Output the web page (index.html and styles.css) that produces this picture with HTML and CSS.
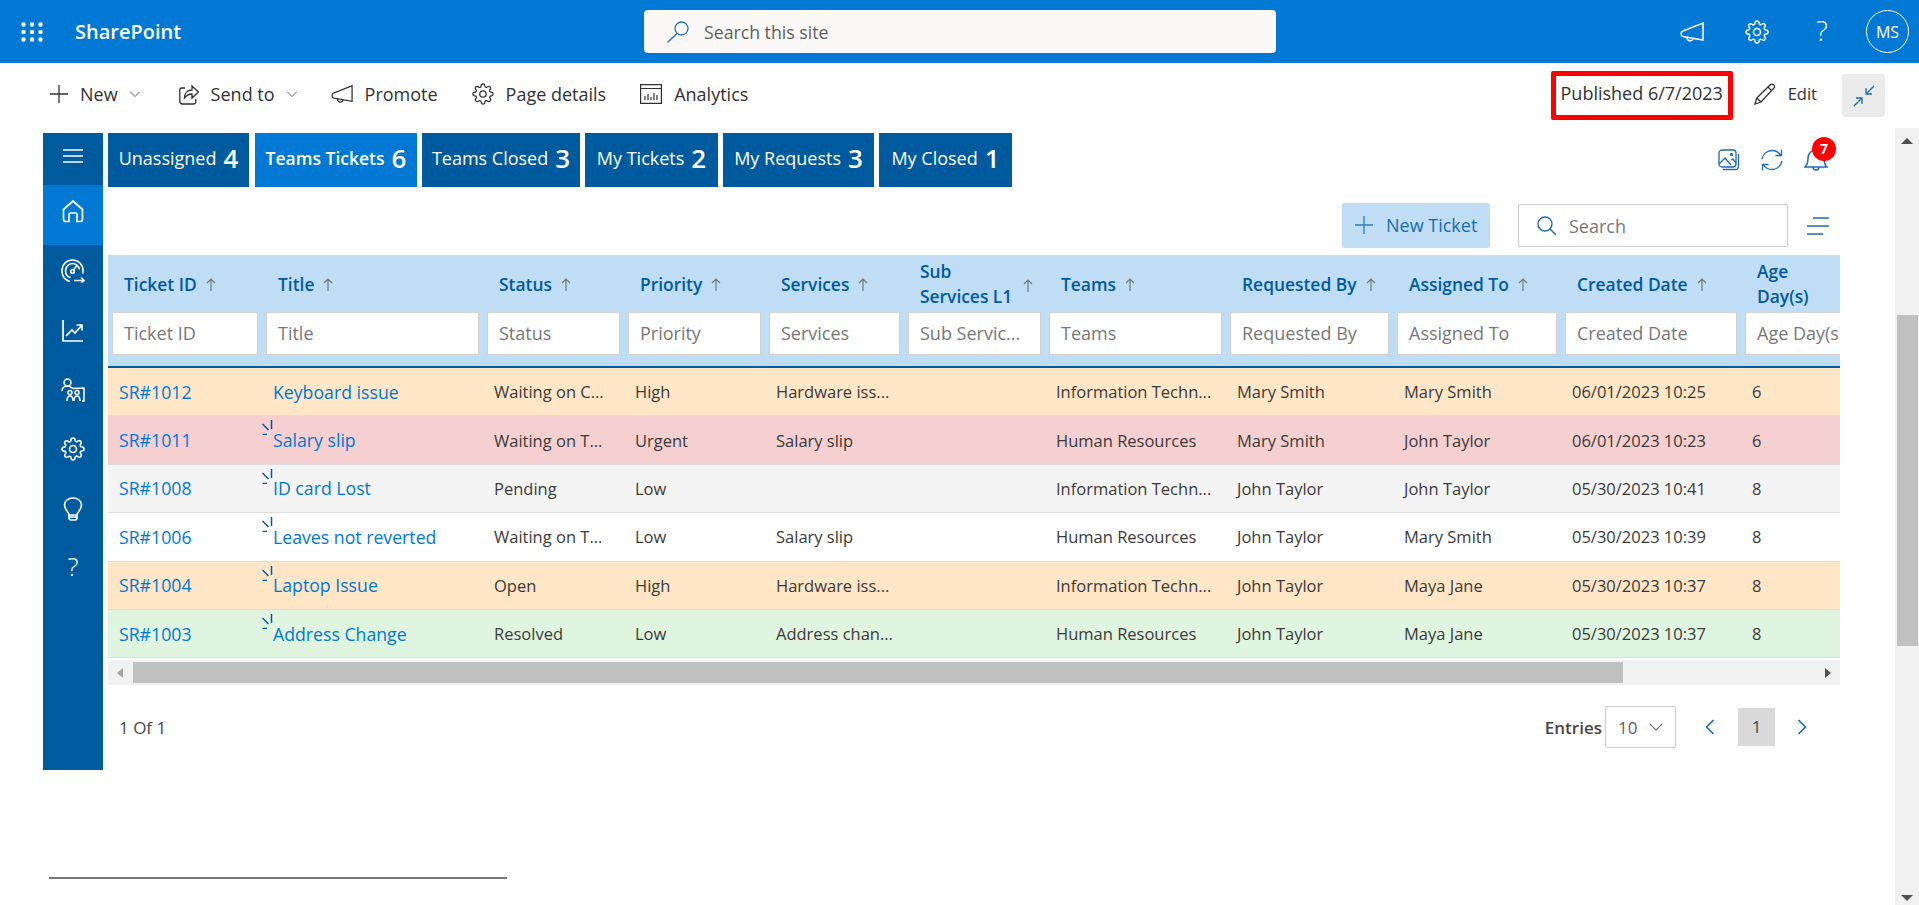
FILE: index.html
```html
<!DOCTYPE html>
<html lang="en">
<head>
    <meta charset="UTF-8">
    <meta name="viewport" content="width=device-width, initial-scale=1.0">
    <title>SharePoint</title>
    <link rel="stylesheet" href="styles.css">
</head>
<body>
    <svg width="0" height="0" class="defs">
        <defs>
            <g id="gear">
                <circle cx="12" cy="12" r="3.500"/>
                <path d="M19.400 15a1.650 1.650 0 0 0 .33 1.820l.06.06a2 2 0 0 1 0 2.830 2 2 0 0 1-2.830 0l-.06-.06a1.650 1.650 0 0 0-1.820-.33 1.650 1.650 0 0 0-1 1.510V21a2 2 0 0 1-2 2 2 2 0 0 1-2-2v-.09A1.650 1.650 0 0 0 9 19.400a1.650 1.650 0 0 0-1.820.33l-.06.06a2 2 0 0 1-2.830 0 2 2 0 0 1 0-2.830l.06-.06a1.650 1.650 0 0 0 .33-1.820 1.650 1.650 0 0 0-1.510-1H3a2 2 0 0 1-2-2 2 2 0 0 1 2-2h.09A1.650 1.650 0 0 0 4.600 9a1.650 1.650 0 0 0-.33-1.820l-.06-.06a2 2 0 0 1 0-2.830 2 2 0 0 1 2.830 0l.06.06a1.650 1.650 0 0 0 1.820.33H9a1.650 1.650 0 0 0 1-1.510V3a2 2 0 0 1 2-2 2 2 0 0 1 2 2v.09a1.650 1.650 0 0 0 1 1.510 1.650 1.650 0 0 0 1.820-.33l.06-.06a2 2 0 0 1 2.830 0 2 2 0 0 1 0 2.830l-.06.06a1.650 1.650 0 0 0-.33 1.820V9a1.650 1.650 0 0 0 1.510 1H21a2 2 0 0 1 2 2 2 2 0 0 1-2 2h-.09a1.650 1.650 0 0 0-1.510 1z"/>
            </g>
            <g id="tick">
                <path d="M9.500 0v9M.5 4l6 6M.5 14.500h4.500"/>
            </g>
            <g id="up">
                <path d="M5 13V1M1 5l4-4 4 4"/>
            </g>
        </defs>
    </svg>

    <header class="suite-bar">
        <svg class="waffle" width="22" height="20" viewBox="0 0 22 20" fill="#fff">
            <circle cx="2.500" cy="2.500" r="2.200"/><circle cx="11" cy="2.500" r="2.200"/><circle cx="19.500" cy="2.500" r="2.200"/>
            <circle cx="2.500" cy="10" r="2.200"/><circle cx="11" cy="10" r="2.200"/><circle cx="19.500" cy="10" r="2.200"/>
            <circle cx="2.500" cy="17.500" r="2.200"/><circle cx="11" cy="17.500" r="2.200"/><circle cx="19.500" cy="17.500" r="2.200"/>
        </svg>
        <span class="brand">SharePoint</span>
        <div class="site-search">
            <svg width="24" height="22" viewBox="0 0 24 22" fill="none" stroke="#2b6cb8" stroke-width="1.300"><circle cx="15.500" cy="7.500" r="6.500"/><path d="M11 12.500 1.500 21.500"/></svg>
            <span>Search this site</span>
        </div>
        <div class="suite-icons">
            <svg width="24" height="24" viewBox="0 0 24 24" fill="none" stroke="#fff" stroke-width="1.500"><path d="M23 3v17L3 16.500c-2.500-.5-2.500-5 0-5.500zM7 17.500c0 4 5.500 4.500 6 1"/></svg>
            <svg width="24" height="24" viewBox="0 0 24 24" fill="none" stroke="#fff" stroke-width="1.500"><use href="#gear"/></svg>
            <span class="help">?</span>
            <span class="avatar">MS</span>
        </div>
    </header>

    <div class="command-bar">
        <div class="command"><svg width="18" height="18" viewBox="0 0 18 18" stroke="#323130" stroke-width="1.300"><path d="M9 0v18M0 9h18"/></svg>New<svg class="caret" width="10" height="10" viewBox="0 0 10 10" fill="none" stroke="#605e5c"><path d="M.5 3l4.500 4.500L9.500 3"/></svg></div>
        <div class="command"><svg width="20" height="22" viewBox="0 0 20 22" fill="none" stroke="#323130" stroke-width="1.300"><path d="M6 5H2.500C1 5 .8 6 .8 7v11c0 2 1 3 2.500 3h11c1.500 0 2.500-1 2.500-2.500V16M5.500 15c0-5 3-8 7.500-8V3l6.500 6-6.500 6v-4c-3 0-5.500 1.500-7.500 4z"/></svg>Send to<svg class="caret" width="10" height="10" viewBox="0 0 10 10" fill="none" stroke="#605e5c"><path d="M.5 3l4.500 4.500L9.500 3"/></svg></div>
        <div class="command"><svg width="22" height="22" viewBox="0 0 24 24" fill="none" stroke="#323130" stroke-width="1.400"><path d="M23 3v17L3 16.500c-2.500-.5-2.500-5 0-5.500zM7 17.500c0 4 5.500 4.500 6 1"/></svg>Promote</div>
        <div class="command"><svg width="22" height="22" viewBox="0 0 24 24" fill="none" stroke="#323130" stroke-width="1.400"><use href="#gear"/></svg>Page details</div>
        <div class="command"><svg width="22" height="20" viewBox="0 0 22 20" fill="none" stroke="#323130" stroke-width="1.200"><path d="M.6.6h20.800v18.800H.6zM.6 4.500h20.800M5 16v-4M8 16V10M11 16v-3M14 16V9M17 16v-5"/></svg>Analytics</div>
        <div class="command-right">
            <span class="published">Published 6/7/2023</span>
            <div class="command edit"><svg width="22" height="22" viewBox="0 0 22 22" fill="none" stroke="#323130" stroke-width="1.300"><path d="M1 21l1.800-6L16 2c1.500-1.500 5-1 4.500 2.500L7 19zM2.800 15 7 19M14 4l4 4"/></svg>Edit</div>
            <div class="collapse-button">
                <svg width="22" height="22" viewBox="0 0 22 22" fill="none" stroke="#1f6bb0" stroke-width="1.300"><path d="M21 1l-8 8M13 3v6h6M1 21l8-8M3 13h6v6"/></svg>
            </div>
        </div>
    </div>

    <div class="workspace">
        <div class="page-body">
            <div class="content-row">
                <nav class="side-nav">
                    <div class="nav-menu"><svg width="20" height="14" viewBox="0 0 20 14" stroke="#fff" stroke-width="1.500"><path d="M0 1h20M0 7h20M0 13h20"/></svg></div>
                    <div class="nav-item active"><svg width="22" height="24" viewBox="0 0 22 24" fill="none" stroke="#fff" stroke-width="1.700"><path d="M1.500 10.500 11 2l9.500 8.500V20c0 1.500-.5 2.500-2 2.500H15v-7c0-1-.5-1.500-1.500-1.500h-5C7.500 14 7 14.500 7 15.500v7H3.500c-1.500 0-2-1-2-2.500z"/></svg></div>
                    <div class="nav-item"><svg width="24" height="24" viewBox="0 0 24 24" fill="none" stroke="#fff" stroke-width="1.600"><path d="M9 22.500C3.500 21 1 16.500 1 12 1 5.500 5.500 1 11.500 1S22 5.500 22 11.500c0 1-.1 2-.4 3M9.500 18.500C6 17.500 4.500 14.500 4.500 12c0-4 3-7.500 7-7.500 3.500 0 6.500 3 7 6M15.500 7l-3 4"/><circle cx="11.500" cy="12.500" r="1.800"/><path d="M13 21.500h10M20 18.500l3 3-3 2.500"/></svg></div>
                    <div class="nav-item"><svg width="22" height="24" viewBox="0 0 22 24" fill="none" stroke="#fff" stroke-width="1.700"><path d="M1 2v21h20M4 18l6-6 3 3 7-8M14.500 7H20v5.500"/></svg></div>
                    <div class="nav-item"><svg width="24" height="24" viewBox="0 0 24 24" fill="none" stroke="#fff" stroke-width="1.500"><circle cx="6.500" cy="4.500" r="3.500"/><path d="M1 13c0-3 2.500-5 5.500-5 2.500 0 3.500 1.500 6 2.500l10.500-.5v13h-2M6 23c0-3 1-5 3-5s3 2 3 5M13 23c0-3 1-5 3-5s3 2 3 5"/><circle cx="9" cy="14.500" r="2"/><circle cx="16" cy="14.500" r="2"/></svg></div>
                    <div class="nav-item"><svg width="24" height="24" viewBox="0 0 24 24" fill="none" stroke="#fff" stroke-width="1.600"><use href="#gear"/></svg></div>
                    <div class="nav-item"><svg width="20" height="24" viewBox="0 0 20 24" fill="none" stroke="#fff" stroke-width="1.600"><path d="M6 18c0-3-4.500-5-4.500-10C1.500 4 5 1 10 1s8.500 3 8.500 7c0 5-4.500 7-4.500 10zM6 18v3c0 1 1 2 2 2h4c1 0 2-1 2-2v-3M6 20h8"/></svg></div>
                    <div class="nav-item nav-help">?</div>
                </nav>

                <main class="main">
                    <div class="tab-row">
                        <div class="tab tab-1">Unassigned <b>4</b></div>
                        <div class="tab tab-2 tab-active">Teams Tickets <b>6</b></div>
                        <div class="tab tab-3">Teams Closed <b>3</b></div>
                        <div class="tab tab-4">My Tickets <b>2</b></div>
                        <div class="tab tab-5">My Requests <b>3</b></div>
                        <div class="tab tab-4">My Closed <b>1</b></div>
                        <div class="tab-icons">
                            <svg width="22" height="22" viewBox="0 0 22 22" fill="none" stroke="#1f6bb0" stroke-width="1.300"><rect x="1" y="1" width="17" height="17" rx="3"/><path d="M1 15l6-6 6 7M13 11l2-1 3 4"/><circle cx="13.500" cy="5.500" r="1"/><path d="M20.500 5v12c0 2-1.500 3.500-3.500 3.500H5"/></svg>
                            <svg width="24" height="24" viewBox="0 0 24 24" fill="none" stroke="#1f6bb0" stroke-width="1.300"><path d="M2 11C3 6 7 2.500 12 2.500c4 0 7 2 9 5M21.500 1.500v6h-6M22 13c-1 5-5 8.500-10 8.500-4 0-7-2-9-5M2.500 22.500v-6h6"/></svg>
                            <div class="bell">
                                <svg width="24" height="24" viewBox="0 0 24 24" fill="none" stroke="#1f6bb0" stroke-width="1.500"><path d="M1 19c2-2 3-4 3-9 0-4 3-8 8-8s8 4 8 8c0 5 1 7 3 9zM9 19c0 4 6 4 6 0"/></svg>
                                <span class="badge">7</span>
                            </div>
                        </div>
                    </div>

                    <div class="tool-row">
                        <div class="new-ticket"><svg width="18" height="18" viewBox="0 0 18 18" stroke="#2c7cc0" stroke-width="1.300"><path d="M9 0v18M0 9h18"/></svg>New Ticket</div>
                        <div class="search-box">
                            <svg width="20" height="20" viewBox="0 0 20 20" fill="none" stroke="#1f6bb0" stroke-width="1.400"><circle cx="8" cy="8" r="7"/><path d="M13 13l6 6"/></svg>
                            <span>Search</span>
                        </div>
                        <svg class="filter-icon" width="22" height="18" viewBox="0 0 22 18" stroke="#1f6bb0" stroke-width="1.300"><path d="M6 1h16M0 9h22M0 17h16"/></svg>
                    </div>

                    <div class="table-wrap">
                        <table class="tickets">
                            <colgroup>
                                <col class="w154"><col class="w221"><col class="w141"><col class="w141"><col class="w139"><col class="w141"><col class="w181"><col class="w167"><col class="w168"><col class="w180"><col class="w320">
                            </colgroup>
                            <thead>
                                <tr class="head-labels">
                                    <th>Ticket ID<svg class="sort" width="10" height="14" viewBox="0 0 10 14"><use href="#up"/></svg></th>
                                    <th>Title<svg class="sort" width="10" height="14" viewBox="0 0 10 14"><use href="#up"/></svg></th>
                                    <th>Status<svg class="sort" width="10" height="14" viewBox="0 0 10 14"><use href="#up"/></svg></th>
                                    <th>Priority<svg class="sort" width="10" height="14" viewBox="0 0 10 14"><use href="#up"/></svg></th>
                                    <th>Services<svg class="sort" width="10" height="14" viewBox="0 0 10 14"><use href="#up"/></svg></th>
                                    <th>Sub<br>Services L1<svg class="sort sort-raised" width="10" height="14" viewBox="0 0 10 14"><use href="#up"/></svg></th>
                                    <th>Teams<svg class="sort" width="10" height="14" viewBox="0 0 10 14"><use href="#up"/></svg></th>
                                    <th>Requested By<svg class="sort" width="10" height="14" viewBox="0 0 10 14"><use href="#up"/></svg></th>
                                    <th>Assigned To<svg class="sort" width="10" height="14" viewBox="0 0 10 14"><use href="#up"/></svg></th>
                                    <th>Created Date<svg class="sort" width="10" height="14" viewBox="0 0 10 14"><use href="#up"/></svg></th>
                                    <th>Age<br>Day(s)</th>
                                </tr>
                                <tr class="head-filters">
                                    <th><div class="filter">Ticket ID</div></th>
                                    <th><div class="filter">Title</div></th>
                                    <th><div class="filter">Status</div></th>
                                    <th><div class="filter">Priority</div></th>
                                    <th><div class="filter">Services</div></th>
                                    <th><div class="filter">Sub Servic...</div></th>
                                    <th><div class="filter">Teams</div></th>
                                    <th><div class="filter">Requested By</div></th>
                                    <th><div class="filter">Assigned To</div></th>
                                    <th><div class="filter">Created Date</div></th>
                                    <th><div class="filter filter-age">Age Day(s)</div></th>
                                </tr>
                            </thead>
                            <tbody>
                                <tr class="row-high">
                                    <td><a>SR#1012</a></td><td><a>Keyboard issue</a></td><td>Waiting on C...</td><td>High</td><td>Hardware iss...</td><td></td><td>Information Techn...</td><td>Mary Smith</td><td>Mary Smith</td><td>06/01/2023 10:25</td><td>6</td>
                                </tr>
                                <tr class="row-urgent">
                                    <td><a>SR#1011</a></td><td class="loading"><svg class="tick" width="11" height="15" viewBox="0 0 11 15"><use href="#tick"/></svg><a>Salary slip</a></td><td>Waiting on T...</td><td>Urgent</td><td>Salary slip</td><td></td><td>Human Resources</td><td>Mary Smith</td><td>John Taylor</td><td>06/01/2023 10:23</td><td>6</td>
                                </tr>
                                <tr class="row-pending">
                                    <td><a>SR#1008</a></td><td class="loading"><svg class="tick" width="11" height="15" viewBox="0 0 11 15"><use href="#tick"/></svg><a>ID card Lost</a></td><td>Pending</td><td>Low</td><td></td><td></td><td>Information Techn...</td><td>John Taylor</td><td>John Taylor</td><td>05/30/2023 10:41</td><td>8</td>
                                </tr>
                                <tr>
                                    <td><a>SR#1006</a></td><td class="loading"><svg class="tick" width="11" height="15" viewBox="0 0 11 15"><use href="#tick"/></svg><a>Leaves not reverted</a></td><td>Waiting on T...</td><td>Low</td><td>Salary slip</td><td></td><td>Human Resources</td><td>John Taylor</td><td>Mary Smith</td><td>05/30/2023 10:39</td><td>8</td>
                                </tr>
                                <tr class="row-high">
                                    <td><a>SR#1004</a></td><td class="loading"><svg class="tick" width="11" height="15" viewBox="0 0 11 15"><use href="#tick"/></svg><a>Laptop Issue</a></td><td>Open</td><td>High</td><td>Hardware iss...</td><td></td><td>Information Techn...</td><td>John Taylor</td><td>Maya Jane</td><td>05/30/2023 10:37</td><td>8</td>
                                </tr>
                                <tr class="row-resolved">
                                    <td><a>SR#1003</a></td><td class="loading"><svg class="tick" width="11" height="15" viewBox="0 0 11 15"><use href="#tick"/></svg><a>Address Change</a></td><td>Resolved</td><td>Low</td><td>Address chan...</td><td></td><td>Human Resources</td><td>John Taylor</td><td>Maya Jane</td><td>05/30/2023 10:37</td><td>8</td>
                                </tr>
                            </tbody>
                        </table>
                    </div>

                    <div class="h-scroll">
                        <span class="arrow-left"></span>
                        <div class="h-thumb"></div>
                        <span class="arrow-right"></span>
                    </div>

                    <div class="pager-row">
                        <span class="page-count">1 Of 1</span>
                        <div class="pager">
                            <span class="entries">Entries</span>
                            <div class="entries-select">10<svg width="14" height="8" viewBox="0 0 14 8" fill="none" stroke="#777" stroke-width="1.100"><path d="M1 1l6 6 6-6"/></svg></div>
                            <svg class="prev" width="10" height="16" viewBox="0 0 10 16" fill="none" stroke="#1f6bb0" stroke-width="1.700"><path d="M8.500 1l-7 7 7 7"/></svg>
                            <span class="page-num">1</span>
                            <svg width="10" height="16" viewBox="0 0 10 16" fill="none" stroke="#1f6bb0" stroke-width="1.700"><path d="M1.500 1l7 7-7 7"/></svg>
                        </div>
                    </div>
                </main>
            </div>
            <div class="footer-rule"></div>
        </div>

        <div class="v-scroll">
            <span class="arrow-up"></span>
            <div class="v-thumb"></div>
            <span class="arrow-down"></span>
        </div>
    </div>
</body>
</html>
```
FILE: styles.css
```css
*{
    box-sizing: border-box;
}

html, body{
    margin: 0;
    height: 100%;
    overflow: hidden;
}

body{
    font-family: "Open Sans", "Noto Sans", sans-serif;
    font-size: 18px;
    color: #323130;
    background-color: #fff;
}

.defs{
    display: none;
}

/* top blue bar */
.suite-bar{
    display: flex;
    align-items: center;
    height: 63px;
    padding-left: 21px;
    padding-right: 10px;
    background-color: #0078d4;
    color: #fff;
}

.brand{
    width: 569px;
    margin-left: 32px;
    font-size: 20px;
    font-weight: 600;
}

.site-search{
    display: flex;
    align-items: center;
    gap: 14px;
    width: 632px;
    height: 43px;
    padding-left: 22px;
    background-color: #faf9f8;
    border-radius: 4px;
    color: #605e5c;
    font-size: 17.700px;
}

.suite-icons{
    display: flex;
    align-items: center;
    gap: 41px;
    margin-left: auto;
}

.help{
    width: 24px;
    padding-bottom: 4px;
    font-size: 28px;
    font-weight: 300;
    text-align: center;
}

.avatar{
    display: flex;
    align-items: center;
    justify-content: center;
    width: 43px;
    height: 43px;
    margin-left: -9px;
    border: 1px solid #fff;
    border-radius: 50%;
    font-size: 16px;
}

/* command bar */
.command-bar{
    display: flex;
    align-items: center;
    gap: 34px;
    height: 65px;
    padding-left: 50px;
    padding-right: 34px;
}

.command{
    display: flex;
    align-items: center;
    gap: 12px;
    margin-bottom: 4px;
    white-space: nowrap;
}

.command:first-child{
    margin-right: 5px;
}

.command-right{
    display: flex;
    align-items: center;
    margin-left: auto;
}

.published{
    width: 182px;
    height: 49px;
    border: 5px solid #f00;
    border-radius: 2px;
    line-height: 35px;
    text-align: center;
    white-space: nowrap;
}

.edit{
    margin-left: 21px;
    font-size: 16.500px;
}

.collapse-button{
    display: flex;
    align-items: center;
    justify-content: center;
    width: 43px;
    height: 43px;
    margin-left: 25px;
    background-color: #ebebeb;
    border-radius: 4px;
}

/* page under the bars */
.workspace{
    display: flex;
    height: 777px;
}

.page-body{
    flex: 1;
}

.content-row{
    display: flex;
    padding-top: 5px;
    padding-left: 43px;
}

.footer-rule{
    width: 458px;
    height: 2px;
    margin-top: 107px;
    margin-left: 49px;
    background-color: #777;
}

.side-nav{
    width: 60px;
    height: 637px;
    background-color: #005a9e;
}

.nav-menu{
    display: flex;
    justify-content: center;
    height: 52px;
    padding-top: 16px;
}

.nav-item{
    display: flex;
    justify-content: center;
    height: 59.500px;
    padding-top: 14px;
}

.active{
    background-color: #0078d4;
}

.nav-help{
    padding-top: 6px;
    color: #fff;
    font-size: 26px;
    font-weight: 300;
}

.main{
    width: 1732px;
    margin-left: 5px;
}

/* tabs */
.tab-row{
    display: flex;
    gap: 5px;
    height: 54px;
}

.tab{
    display: flex;
    align-items: center;
    justify-content: center;
    gap: 7px;
    padding-bottom: 4px;
    background-color: #005a9e;
    color: #fff;
    white-space: nowrap;
}

.tab b{
    font-size: 26px;
    font-weight: 600;
}

.tab-1{
    width: 141px;
}

.tab-2{
    width: 162px;
    margin-left: 1px;
}

.tab-3{
    width: 158px;
}

.tab-4{
    width: 133px;
}

.tab-5{
    width: 151px;
}

.tab-active{
    background-color: #0078d4;
    font-size: 17.500px;
    font-weight: 600;
}

.tab-icons{
    display: flex;
    align-items: center;
    gap: 20px;
    margin-left: auto;
    padding-right: 12px;
}

.bell{
    position: relative;
    height: 24px;
}

.bell svg{
    display: block;
}

.badge{
    position: absolute;
    top: -11px;
    left: 8px;
    width: 24px;
    height: 24px;
    background-color: #f00;
    border-radius: 50%;
    color: #fff;
    font-size: 14px;
    font-weight: 700;
    line-height: 24px;
    text-align: center;
}

/* new ticket + search */
.tool-row{
    display: flex;
    align-items: center;
    justify-content: flex-end;
    height: 45px;
    margin-top: 16px;
    margin-bottom: 7px;
    padding-right: 11px;
}

.new-ticket{
    display: flex;
    align-items: center;
    gap: 13px;
    width: 148px;
    height: 45px;
    padding-left: 13px;
    padding-bottom: 1px;
    background-color: #bfddf5;
    border-radius: 3px;
    color: #1a6cad;
    white-space: nowrap;
}

.search-box{
    display: flex;
    align-items: center;
    gap: 12px;
    width: 270px;
    height: 43px;
    margin-left: 28px;
    padding-left: 18px;
    border: 1px solid #ccc;
    border-radius: 2px;
    color: #777;
}

.filter-icon{
    margin-left: 19px;
}

/* table */
.table-wrap{
    height: 405px;
    overflow: hidden;
}

.tickets{
    width: 1953px;
    border-collapse: separate;
    border-spacing: 0;
    table-layout: fixed;
}

.w154{ width: 154px; }
.w221{ width: 221px; }
.w141{ width: 141px; }
.w139{ width: 139px; }
.w181{ width: 181px; }
.w167{ width: 167px; }
.w168{ width: 168px; }
.w180{ width: 180px; }
.w320{ width: 320px; }

thead th{
    background-color: #bfddf5;
    text-align: left;
}

.head-labels th{
    height: 57px;
    padding-top: 2px;
    padding-left: 16px;
    color: #005a9e;
    font-size: 17.400px;
    font-weight: 600;
    line-height: 25px;
    white-space: nowrap;
}

.sort{
    margin-left: 9px;
    vertical-align: -1px;
    fill: none;
    stroke: #777;
    stroke-width: 1.200;
}

.sort-raised{
    position: relative;
    top: -11px;
    margin-left: 11px;
}

.head-filters th{
    height: 56px;
    padding: 0 4px 11px 4px;
    border-bottom: 2px solid #005a9e;
    vertical-align: top;
}

.filter{
    height: 43px;
    padding-left: 11px;
    overflow: hidden;
    background-color: #fff;
    border: 1px solid #d2d2d2;
    color: #777;
    font-size: 18px;
    font-weight: 400;
    line-height: 40px;
    white-space: nowrap;
}

.filter-age{
    width: 140px;
}

tbody td{
    position: relative;
    height: 48.400px;
    padding-left: 11px;
    overflow: hidden;
    border-bottom: 1px solid #ddd;
    color: #3b3a39;
    font-size: 16.500px;
    white-space: nowrap;
}

tbody a{
    color: #0078d4;
    font-size: 17.700px;
}

.tick{
    position: absolute;
    top: 4px;
    left: 0;
    fill: none;
    stroke: #005a9e;
    stroke-width: 1.500;
}

.row-high td{
    background-color: #fee6c6;
}

.row-urgent td{
    background-color: #f6cfd0;
}

.row-pending td{
    background-color: #f4f4f4;
}

.row-resolved td{
    background-color: #dff5e0;
}

/* fake scrollbars */
.h-scroll{
    display: flex;
    align-items: center;
    height: 25px;
    padding-left: 9px;
    padding-right: 9px;
    background-color: #f1f1f1;
}

.arrow-left{
    border-top: 5px solid transparent;
    border-bottom: 5px solid transparent;
    border-right: 6px solid #a3a3a3;
}

.arrow-right{
    margin-left: auto;
    border-top: 5px solid transparent;
    border-bottom: 5px solid transparent;
    border-left: 6px solid #505050;
}

.h-thumb{
    width: 1490px;
    height: 21px;
    margin-left: 10px;
    background-color: #c0c0c0;
}

.v-scroll{
    display: flex;
    flex-direction: column;
    align-items: center;
    width: 24px;
    padding-top: 10px;
    padding-bottom: 4px;
    background-color: #f1f1f1;
}

.arrow-up{
    border-left: 6px solid transparent;
    border-right: 6px solid transparent;
    border-bottom: 6px solid #505050;
}

.arrow-down{
    margin-top: auto;
    border-left: 6px solid transparent;
    border-right: 6px solid transparent;
    border-top: 6px solid #505050;
}

.v-thumb{
    width: 21px;
    height: 331px;
    margin-top: 171px;
    background-color: #c0c0c0;
}

/* pager */
.pager-row{
    display: flex;
    align-items: center;
    justify-content: space-between;
    height: 42px;
    margin-top: 21px;
    padding-left: 11px;
    padding-right: 33px;
    color: #484644;
}

.page-count{
    font-size: 17px;
}

.pager{
    display: flex;
    align-items: center;
}

.entries{
    margin-right: 3px;
    font-size: 17px;
    font-weight: 600;
}

.entries-select{
    display: flex;
    align-items: center;
    justify-content: space-between;
    width: 71px;
    height: 42px;
    padding-left: 12px;
    padding-right: 12px;
    border: 1px solid #ccc;
    border-radius: 2px;
    color: #605e5c;
    font-size: 17px;
}

.prev{
    margin-left: 29px;
    margin-right: 23px;
}

.page-num{
    width: 37px;
    height: 38px;
    margin-right: 22px;
    background-color: #d9d9d9;
    font-size: 17px;
    line-height: 38px;
    text-align: center;
}
```
